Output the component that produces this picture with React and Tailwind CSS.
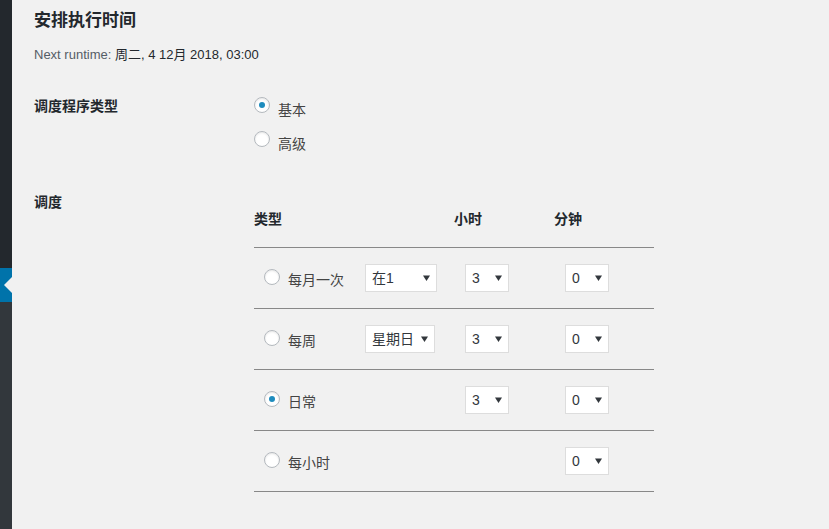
import React from "react";

const font = "font-['Liberation_Sans','Noto_Sans_CJK_SC',sans-serif]";

function Radio({ checked }) {
  return (
    <span className="flex h-4 w-4 shrink-0 items-center justify-center rounded-full border border-[#b4b9be] bg-white shadow-[inset_0_1px_2px_rgba(0,0,0,0.1)]">
      {checked && <span className="h-[6px] w-[6px] rounded-full bg-[#1e8cbe]" />}
    </span>
  );
}

function Select({ value, width }) {
  return (
    <div
      className={`flex h-[28px] items-center justify-between border border-[#dddddd] bg-white pl-[6px] pr-[6px] text-[14px] leading-[20px] text-[#32373c] ${width}`}
    >
      <span>{value}</span>
      <svg width="7" height="6" viewBox="0 0 7 6" className="shrink-0">
        <path d="M0 0.5h7L3.5 6z" fill="#32373c" />
      </svg>
    </div>
  );
}

const rows = [
  { label: "每月一次", day: "在1", dayWidth: "w-[72px]", hour: true },
  { label: "每周", day: "星期日", dayWidth: "w-[70px]", hour: true },
  { label: "日常", checked: true, hour: true },
  { label: "每小时" },
];

export default function App() {
  return (
    <div className={`flex min-h-screen ${font}`}>
      {/* admin sidebar strip */}
      <div className="flex w-[12px] shrink-0 flex-col">
        <div className="h-[268px] bg-[#23282d]" />
        <div className="relative h-[34px] bg-[#0073aa]">
          <span className="absolute right-0 top-[9px] h-0 w-0 border-y-[8px] border-r-[8px] border-y-transparent border-r-[#f1f1f1]" />
        </div>
        <div className="flex-1 bg-[#32373c]" />
      </div>

      <div className="flex-1 bg-[#f1f1f1] pl-[22px] pt-[9px]">
        <h2 className="text-[17px] font-bold leading-[24px] text-[#23282d]">安排执行时间</h2>
        <p className="mt-[14px] text-[13px] leading-[16px] text-[#555d66]">
          Next runtime: <span className="text-[#23282d]">周二, 4 12月 2018, 03:00</span>
        </p>

        {/* scheduler type */}
        <div className="mt-[33px] flex h-[96px]">
          <div className="w-[220px] text-[14px] font-bold leading-[20px] text-[#23282d]">调度程序类型</div>
          <div className="flex flex-col gap-[14px]">
            <label className="flex h-[20px] items-start gap-[8px] text-[14px] leading-[20px] text-[#444]">
              <span className="pt-[1px]">
                <Radio checked />
              </span>
              <span className="mt-[4px]">基本</span>
            </label>
            <label className="flex h-[20px] items-start gap-[8px] text-[14px] leading-[20px] text-[#444]">
              <span className="pt-[1px]">
                <Radio />
              </span>
              <span className="mt-[4px]">高级</span>
            </label>
          </div>
        </div>

        {/* schedule */}
        <div className="flex">
          <div className="w-[220px] text-[14px] font-bold leading-[20px] text-[#23282d]">调度</div>
          <div className="w-[400px]">
            <div className="flex h-[56px] border-b border-[#888] pt-[17px] text-[14px] font-bold leading-[20px] text-[#23282d]">
              <div className="w-[200px]">类型</div>
              <div className="w-[100px]">小时</div>
              <div>分钟</div>
            </div>
            {rows.map((r) => (
              <div key={r.label} className="flex h-[61px] items-center border-b border-[#888] text-[14px] leading-[20px] text-[#444]">
                <div className="flex w-[111px] items-center gap-[8px] pl-[10px]">
                  <span className="mb-[2px]">
                    <Radio checked={r.checked} />
                  </span>
                  <span className="mt-[4px]">{r.label}</span>
                </div>
                <div className="w-[100px]">{r.day && <Select value={r.day} width={r.dayWidth} />}</div>
                <div className="w-[100px]">{r.hour && <Select value="3" width="w-[44px]" />}</div>
                <div>
                  <Select value="0" width="w-[44px]" />
                </div>
              </div>
            ))}
          </div>
        </div>
      </div>
    </div>
  );
}
